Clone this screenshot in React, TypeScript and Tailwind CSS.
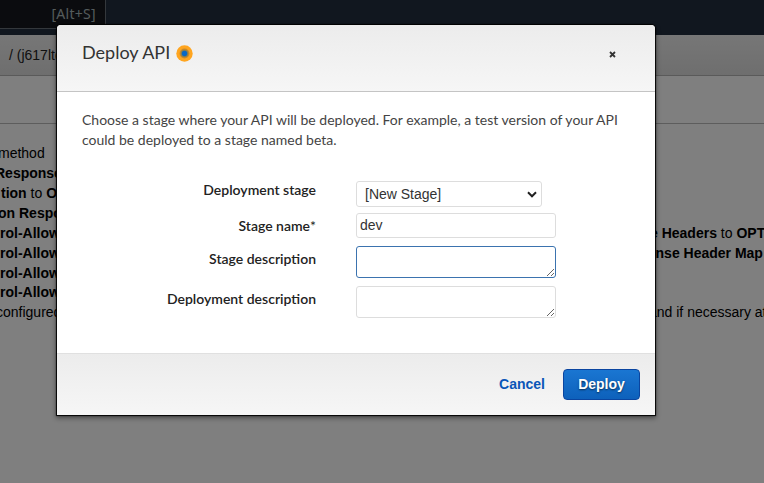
import type { ReactNode } from "react";

type LogRow = { left: ReactNode; right?: ReactNode; pad?: string; gap?: string };

const rows: LogRow[] = [
  { left: "method", pad: "-ml-[2px]" },
  { left: <b>Response</b>, pad: "-ml-[5px]" },
  { left: <><b>tion</b> to <b>OPT</b></>, pad: "ml-px" },
  { left: <b>on Respon</b>, pad: "-ml-[2px]" },
  { left: <b>rol-Allow-</b>, pad: "ml-0", right: <><b>e Headers</b> to <b>OPT</b></>, gap: "pl-[650px]" },
  { left: <b>rol-Allow-</b>, pad: "ml-0", right: <b>onse Header Map</b>, gap: "pl-[647px]" },
  { left: <b>rol-Allow-</b>, pad: "ml-0" },
  { left: <b>rol-Allow-</b>, pad: "-mt-px" },
  { left: "configured", pad: "-ml-[4px]", right: "and if necessary at", gap: "pl-[649px]" },
];

function Page() {
  return (
    <div className="col-start-1 row-start-1 flex h-[483px] min-w-0 flex-col overflow-hidden bg-white">
      <header className="flex h-[35px] shrink-0 bg-[#232f3e]">
        <div className="flex h-[29px] w-[106px] items-center justify-end border-r border-b border-[#687078] bg-[#16191f] pr-[9px] font-['Noto_Sans','Open_Sans',sans-serif] text-sm tracking-[0.3px] text-[#aab7b8]">
          [Alt+S]
        </div>
      </header>
      <div className="flex h-[41px] shrink-0 items-center border-b border-[#b4b4b4] bg-linear-to-b from-[#eeeeee] to-[#dddddd] pl-[9px] text-sm text-[#222]">
        / (j617lto)
      </div>
      <div className="h-12 shrink-0 border-b border-[#bbb]" />
      <div className="flex flex-col pt-[19px] text-sm leading-5 text-black">
        {rows.map((row, i) => (
          <div key={i} className="grid whitespace-nowrap">
            <span className={`col-start-1 row-start-1 ${row.pad}`}>{row.left}</span>
            {row.right && <span className={`col-start-1 row-start-1 ${row.gap}`}>{row.right}</span>}
          </div>
        ))}
      </div>
    </div>
  );
}

function Label({ children, className }: { children: ReactNode; className: string }) {
  return <label className={`w-[259px] shrink-0 text-right text-sm leading-5 font-semibold text-[#222] ${className}`}>{children}</label>;
}

function Dialog() {
  return (
    <section className="mt-[25px] ml-[57px] flex h-[390px] w-[598px] flex-col overflow-hidden rounded-t-[4px] bg-white font-[Lato,sans-serif] shadow-[0_0_1px_1px_#000,0_2px_5px_1px_rgba(0,0,0,0.45)]">
      <header className="flex h-[67px] shrink-0 items-start border-b border-[#c4c4c4] bg-linear-to-b from-[#ececec] to-[#f6f6f6] pt-[14px] pl-[25px]">
        <h1 className="w-[88px] text-[18px] leading-[26px] whitespace-nowrap text-[#333]">Deploy API</h1>
        <svg className="mt-[6px] ml-[6px] size-[17px]" viewBox="0 0 17 17">
          <circle cx="8.5" cy="8.5" r="8.2" fill="#ffa51f" />
          <circle cx="8.5" cy="8.5" r="4.9" fill="#c88a2c" />
          <circle cx="8.5" cy="8.5" r="3.8" fill="#8c7f4b" />
          <circle cx="8.5" cy="8.5" r="2.7" fill="#0868c5" />
        </svg>
        <button className="mt-[12px] mr-[39px] ml-auto size-[7px]" aria-label="Close">
          <svg viewBox="0 0 7 7" className="size-[7px]">
            <path d="M1 1 6 6M6 1 1 6" stroke="#333" strokeWidth="1.8" />
          </svg>
        </button>
      </header>
      <div className="flex flex-1 flex-col">
        <p className="mt-[18px] ml-[25px] w-[560px] text-sm leading-5 text-[#444]">
          Choose a stage where your API will be deployed. For example, a test version of your API<br />could be deployed to a stage named beta.
        </p>
        <form className="mt-[31px] font-['Liberation_Sans',Arial,sans-serif] text-sm text-[#333]">
          <div className="flex h-8 items-start font-[Lato,sans-serif]">
            <Label className="-mt-px">Deployment stage</Label>
            <div className="ml-10 flex h-[26px] w-[186px] items-center justify-between rounded-[3px] border border-[#ddd] pr-1 pl-2 font-['Liberation_Sans',Arial,sans-serif]">
              <span>[New Stage]</span>
              <svg viewBox="0 0 10 7" className="h-[7px] w-[10px]">
                <path d="m1 1.3 4 4 4-4" fill="none" stroke="#222" strokeWidth="2" />
              </svg>
            </div>
          </div>
          <div className="flex h-[33px] items-start font-[Lato,sans-serif]">
            <Label className="mt-[3px]">Stage name<span className="font-normal">*</span></Label>
            <input defaultValue="dev" className="ml-10 h-[25px] w-[200px] rounded-[3px] border border-[#ddd] px-[3px] pb-px font-['Liberation_Sans',Arial,sans-serif] text-sm outline-none" />
          </div>
          <div className="flex h-10 items-start font-[Lato,sans-serif]">
            <Label className="mt-[3px]">Stage description</Label>
            <textarea className="ml-10 h-8 w-[200px] rounded-[3px] border border-[#3b73af] outline-none" />
          </div>
          <div className="flex h-10 items-start font-[Lato,sans-serif]">
            <Label className="mt-[3px]">Deployment description</Label>
            <textarea className="ml-10 h-8 w-[200px] rounded-[3px] border border-[#ddd] outline-none" />
          </div>
        </form>
      </div>
      <footer className="flex h-[62px] shrink-0 items-start justify-end border-t border-[#e0e0e0] bg-linear-to-b from-[#ececec] to-[#f6f6f6] pt-[15px] pr-[15px] font-['Liberation_Sans',Arial,sans-serif] text-sm font-bold">
        <button className="mr-[18px] h-[30px] text-[#0a56b8]">Cancel</button>
        <button className="h-[31px] w-[77px] rounded-[4px] border border-[#0a45a0] bg-linear-to-b from-[#1a76d2] to-[#0d61bb] pb-px text-white [text-shadow:0_1px_2px_rgba(0,0,0,0.6)]">
          Deploy
        </button>
      </footer>
    </section>
  );
}

export default function App() {
  return (
    <main className="grid h-[483px] w-[764px] grid-cols-1 overflow-hidden font-['Liberation_Sans',Arial,sans-serif]">
      <Page />
      <div className="z-10 col-start-1 row-start-1 bg-black/50">
        <Dialog />
      </div>
    </main>
  );
}
